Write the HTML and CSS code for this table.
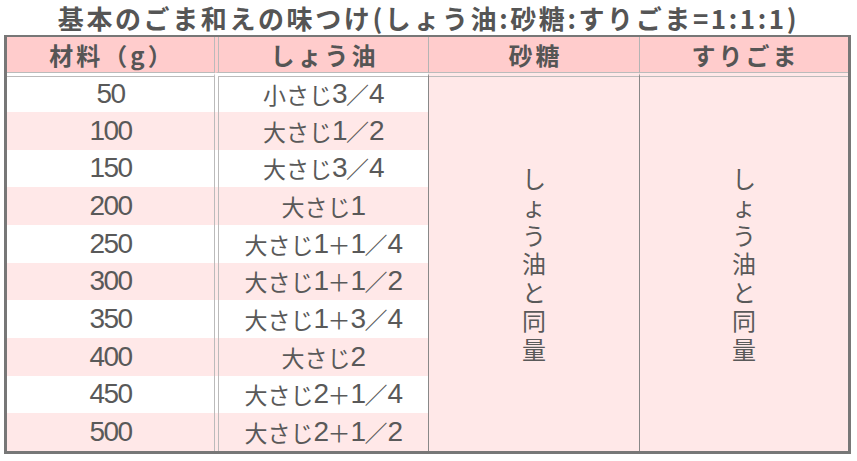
FILE: index.html
```html
<!DOCTYPE html>
<html lang="ja">
<head>
<meta charset="utf-8">
<link rel="stylesheet" href="styles.css">
</head>
<body>
<h1 class="title">基本のごま和えの味つけ(しょう油:砂糖:すりごま=1:1:1)</h1>
<div class="table">
  <div class="th c1">材料（g）</div>
  <div class="th c2">しょう油</div>
  <div class="th c3">砂糖</div>
  <div class="th c4">すりごま</div>

  <div class="td c1 first"><span class="n">50</span></div>
  <div class="td c2 first">小さじ<span class="n">3</span>／<span class="n">4</span></div>
  <div class="td c3 first tall"><span class="vt">しょう油と同量</span></div>
  <div class="td c4 first tall"><span class="vt">しょう油と同量</span></div>

  <div class="td c1 alt"><span class="n">100</span></div>
  <div class="td c2 alt">大さじ<span class="n">1</span>／<span class="n">2</span></div>

  <div class="td c1"><span class="n">150</span></div>
  <div class="td c2">大さじ<span class="n">3</span>／<span class="n">4</span></div>

  <div class="td c1 alt"><span class="n">200</span></div>
  <div class="td c2 alt">大さじ<span class="n">1</span></div>

  <div class="td c1"><span class="n">250</span></div>
  <div class="td c2">大さじ<span class="n">1</span>＋<span class="n">1</span>／<span class="n">4</span></div>

  <div class="td c1 alt"><span class="n">300</span></div>
  <div class="td c2 alt">大さじ<span class="n">1</span>＋<span class="n">1</span>／<span class="n">2</span></div>

  <div class="td c1"><span class="n">350</span></div>
  <div class="td c2">大さじ<span class="n">1</span>＋<span class="n">3</span>／<span class="n">4</span></div>

  <div class="td c1 alt"><span class="n">400</span></div>
  <div class="td c2 alt">大さじ<span class="n">2</span></div>

  <div class="td c1"><span class="n">450</span></div>
  <div class="td c2">大さじ<span class="n">2</span>＋<span class="n">1</span>／<span class="n">4</span></div>

  <div class="td c1 alt"><span class="n">500</span></div>
  <div class="td c2 alt">大さじ<span class="n">2</span>＋<span class="n">1</span>／<span class="n">2</span></div>
</div>
</body>
</html>
```

FILE: styles.css
```css
* { box-sizing: border-box; }
html, body { margin: 0; padding: 0; background: #fff; }
body {
  width: 857px;
  height: 461px;
  overflow: hidden;
  font-family: "Noto Sans CJK JP", sans-serif;
  color: #595959;
}
.title {
  margin: 0;
  height: 35px;
  line-height: 35px;
  font-size: 26px;
  font-weight: bold;
  color: #555;
  text-align: center;
  letter-spacing: 2.6px;
  white-space: nowrap;
}
.table {
  display: grid;
  grid-template-columns: 208px 214px 211px 208px;
  grid-template-rows: 36px 39px repeat(9, 1fr);
  width: 847px;
  height: 419px;
  margin-left: 4px;
  border-style: solid;
  border-color: #777;
  border-width: 2px 3px 3px 3px;
}
.th, .td {
  display: flex;
  align-items: center;
  justify-content: center;
  white-space: nowrap;
}
.th {
  background: #ffcccc;
  border-bottom: 1px solid #bbb;
  font-size: 24px;
  font-weight: bold;
  letter-spacing: 3px;
  color: #555;
  padding-left: 3px;
}
.td {
  background: #fff;
  font-size: 23px;
}
.td.alt, .td.tall { background: #ffe8e8; }
.c1 { grid-column: 1; border-right: 1px solid #bbb; }
.c2 {
  grid-column: 2;
  border-left: 3px solid transparent;
  box-shadow: inset 1px 0 #bbb;
}
.c3 { grid-column: 3; }
.c4 { grid-column: 4; }
.th.c2, .th.c3 { border-right: 1px solid #b4b4b4; }
.td.c2, .td.c3 { border-right: 1px solid #888; }
.tall { grid-row: 2 / span 10; }
.first {
  border-top: 3px solid transparent;
  box-shadow: inset 0 1px #bbb;
}
.c2.first { box-shadow: inset 1px 0 #bbb, inset 0 1px #bbb; }
.n {
  font-family: "Liberation Sans", sans-serif;
  font-size: 28px;
  letter-spacing: -1.5px;
}
.vt {
  display: block;
  width: 1em;
  font-size: 24px;
  line-height: 28.5px;
  text-align: center;
  white-space: normal;
  line-break: anywhere;
  word-break: break-all;
}
```
